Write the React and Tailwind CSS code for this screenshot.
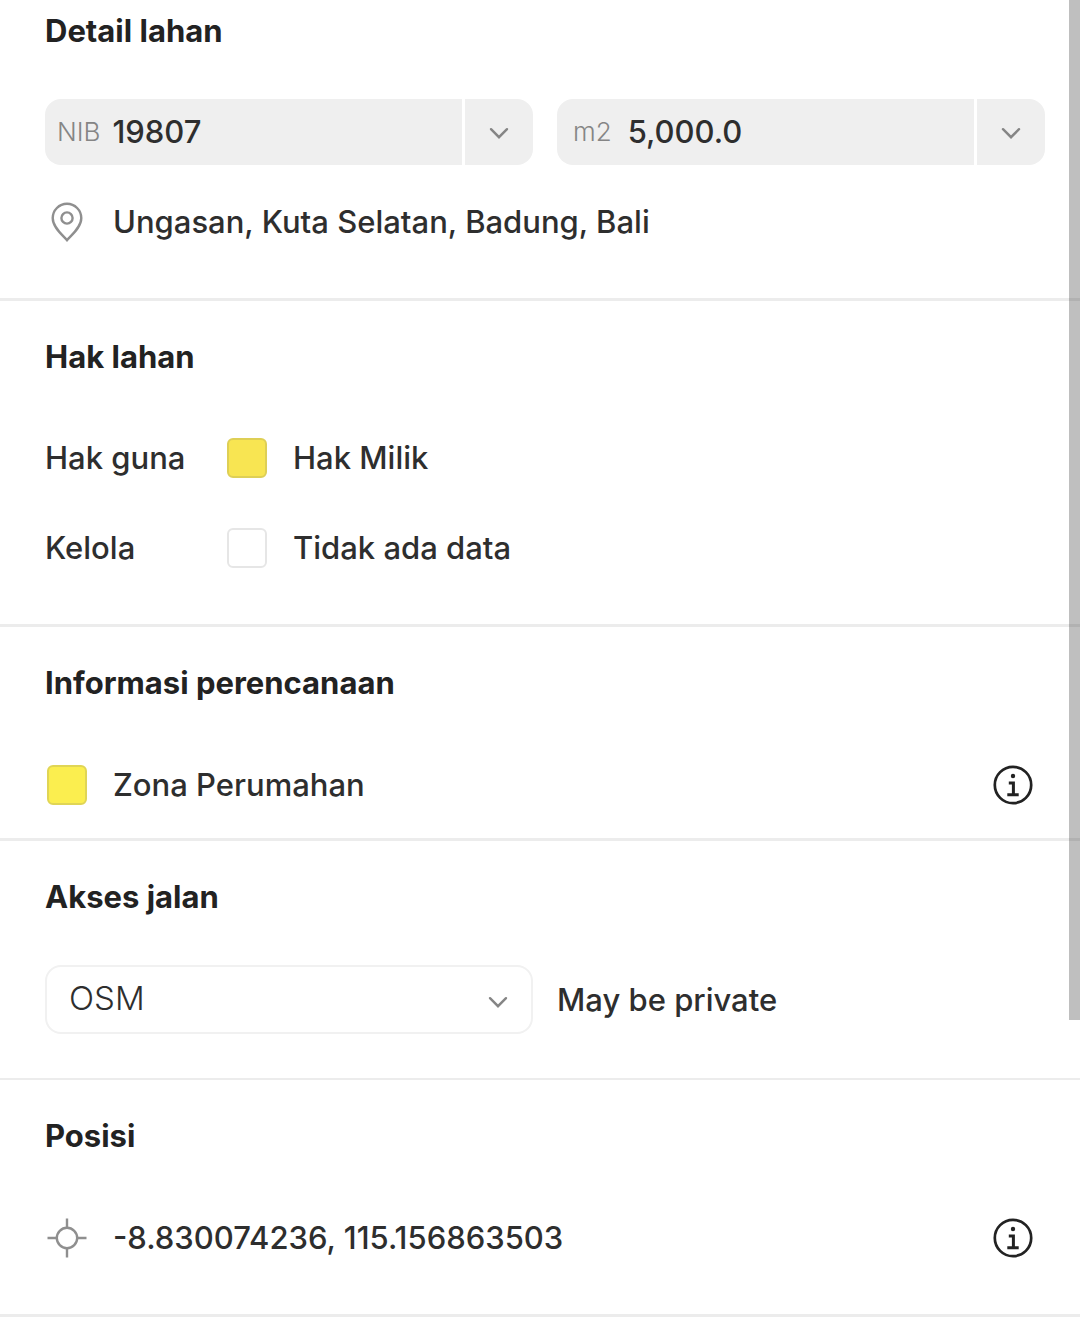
function ChevronIcon({ className = "" }) {
  return (
    <svg viewBox="0 0 24 24" className={`w-6 h-6 ${className}`} fill="none" stroke="#858585" strokeWidth="2.4" strokeLinecap="round" aria-hidden="true">
      <path d="M4 9.2 12 17.2 20 9.2" />
    </svg>
  );
}

function PinIcon() {
  return (
    <svg viewBox="0 0 40 40" className="w-10 h-10" fill="none" stroke="#8f8f8f" strokeWidth="2.4" aria-hidden="true">
      <path d="M20 38.2C15.5 33 5.7 25.5 5.7 16.1a14.3 14.3 0 0 1 28.6 0C34.3 25.5 24.5 33 20 38.2Z" />
      <circle cx="20" cy="16" r="5.6" />
    </svg>
  );
}

function TargetIcon() {
  return (
    <svg viewBox="0 0 40 40" className="w-10 h-10" fill="none" stroke="#8f8f8f" strokeWidth="2.4" aria-hidden="true">
      <circle cx="20" cy="20" r="10.2" />
      <path d="M20 .5v9.3M20 30.2v9.3M.5 20h9.3M30.2 20h9.3" />
    </svg>
  );
}

function InfoButton({ label }) {
  return (
    <button type="button" aria-label={label} className="ml-auto mr-3">
      <svg viewBox="0 0 40 40" className="w-10 h-10" fill="none" stroke="#222" strokeWidth="2.7">
        <circle cx="20" cy="20" r="18.2" />
        <circle cx="20" cy="11" r="2.2" fill="#222" stroke="none" />
        <path d="M15.8 18h4.6v11.6M14.3 29.8h11.4" strokeWidth="3" />
      </svg>
    </button>
  );
}

function Swatch({ className }) {
  return <span className={`w-10 h-10 rounded-md border-2 ${className}`} />;
}

function Section({ title, className = "", children }) {
  return (
    <section className={`pl-[45px] pr-[35px] border-[#ececec] ${className}`}>
      <h2 className="text-[31px] leading-10 font-bold text-[#222]">{title}</h2>
      {children}
    </section>
  );
}

function Row({ label, icon, text, className = "", children }) {
  return (
    <div className={`flex items-center h-10 ${className}`}>
      {label && <span className="w-[180px]">{label}</span>}
      <span className="w-11 mr-6 flex justify-center shrink-0">{icon}</span>
      <span>{text}</span>
      {children}
    </div>
  );
}

function UnitField({ id, unit, value, className }) {
  return (
    <div className="flex h-[66px] rounded-2xl bg-[#efefef] overflow-hidden">
      <div className={`flex items-center flex-1 min-w-0 ${className}`}>
        <label htmlFor={id} className="text-[26px] font-light text-[#858585]">
          {unit}
        </label>
        <input id={id} defaultValue={value} readOnly className="flex-1 min-w-0 bg-transparent outline-none" />
      </div>
      <button type="button" aria-label={`${unit} options`} className="w-[71px] flex items-center justify-center border-l-[3px] border-white">
        <ChevronIcon />
      </button>
    </div>
  );
}

export default function App() {
  return (
    <main className="relative min-h-screen bg-white font-['Inter',sans-serif] font-medium text-[31px] leading-10 text-[#2e2e2e]">
      <Section title="Detail lahan" className="pt-[11px] pb-14 border-b-[3px]">
        <div className="grid grid-cols-2 gap-6 mt-12">
          <UnitField id="nib" unit="NIB" value="19807" className="pl-3 gap-3" />
          <UnitField id="area" unit="m2" value="5,000.0" className="pl-4 gap-4" />
        </div>
        <Row icon={<PinIcon />} text="Ungasan, Kuta Selatan, Badung, Bali" className="mt-[37px]" />
      </Section>

      <Section title="Hak lahan" className="pt-9 pb-14 border-b-[3px]">
        <Row label="Hak guna" icon={<Swatch className="bg-[#f8e552] border-[#decf55]" />} text="Hak Milik" className="mt-[61px]" />
        <Row label="Kelola" icon={<Swatch className="bg-white border-[#e6e6e6]" />} text="Tidak ada data" className="mt-[50px]" />
      </Section>

      <Section title="Informasi perencanaan" className="pt-9 pb-[33px] border-b-[3px]">
        <Row icon={<Swatch className="bg-[#fbee4f] border-[#e0d555]" />} text="Zona Perumahan" className="mt-[62px]">
          <InfoButton label="Info zona" />
        </Row>
      </Section>

      <Section title="Akses jalan" className="pt-9 pb-11 border-b-2">
        <div className="grid grid-cols-2 gap-6 items-center mt-12">
          <div className="relative">
            <select aria-label="Akses jalan" className="appearance-none w-full h-[69px] pl-[22px] pb-1 rounded-2xl border-2 border-[#f1f1f1] bg-white text-[33px] font-light outline-none">
              <option>OSM</option>
            </select>
            <ChevronIcon className="absolute right-[23px] top-6 pointer-events-none" />
          </div>
          <span>May be private</span>
        </div>
      </Section>

      <Section title="Posisi" className="pt-9 pb-14 border-b-[3px]">
        <Row icon={<TargetIcon />} text="-8.830074236, 115.156863503" className="mt-[62px]">
          <InfoButton label="Info posisi" />
        </Row>
      </Section>

      <div className="absolute top-0 right-0 w-[11px] h-[1020px] bg-black/25" />
    </main>
  );
}
